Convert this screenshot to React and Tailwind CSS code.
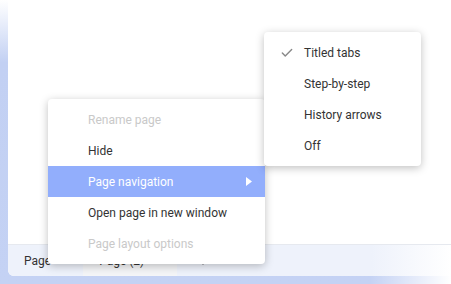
import { Check, X, Plus } from 'lucide-react';

const mainItems = [
  { label: 'Rename page', disabled: true },
  { label: 'Hide' },
  { label: 'Page navigation', active: true, sub: true },
  { label: 'Open page in new window' },
  { label: 'Page layout options', disabled: true },
];

const navItems = [
  { label: 'Titled tabs', checked: true },
  { label: 'Step-by-step' },
  { label: 'History arrows' },
  { label: 'Off' },
];

function App() {
  return (
    <div
      className="relative w-[451px] h-[284px] overflow-hidden bg-[linear-gradient(to_bottom,#ffffff,#c2d0f3_22%,#c4d2f4)] text-[12px] text-[#333]"
      style={{ fontFamily: 'Roboto, "Liberation Sans", sans-serif' }}
    >
      <div className="flex flex-col h-full pl-2 pb-2 bg-[linear-gradient(to_right,transparent_82%,#ffffff)]">
        <div className="flex-1 flex flex-col bg-white rounded-bl-md overflow-hidden">
          <div className="flex-1" />

          {/* tab bar */}
          <div className="h-8 flex items-center border-t border-[#e6e9ef] bg-[linear-gradient(to_right,#eef2fb_82%,#ffffff)]">
            <div className="flex items-center h-full pl-4 pr-3 gap-2">
              <span>Page</span>
              <X size={10} className="text-[#999]" />
            </div>
            <div className="flex items-center h-full ml-[2px] w-[94px] bg-[#f4f5f7] pl-4 gap-2">
              <span>Page (2)</span>
              <X size={10} className="text-[#999]" />
            </div>
            <Plus size={12} className="ml-5 text-[#777]" />
          </div>
        </div>
      </div>

      {/* context menu */}
      <div className="absolute left-[48px] top-[99px] w-[217px] py-[5px] bg-white rounded-[4px] shadow-[0_2px_8px_rgba(0,0,0,0.25)]">
        {mainItems.map((it) => (
          <div
            key={it.label}
            className={
              'relative h-[31px] flex items-center pl-10 ' +
              (it.active ? 'bg-[#92aefc] text-white' : it.disabled ? 'text-[#c9c9c9]' : 'text-[#333]')
            }
          >
            {it.label}
            {it.sub && (
              <svg className="absolute right-[13px]" width="6" height="9" viewBox="0 0 6 9">
                <path d="M0 0 L6 4.5 L0 9 Z" fill="white" />
              </svg>
            )}
          </div>
        ))}
      </div>

      {/* submenu */}
      <div className="absolute left-[264px] top-[32px] w-[157px] py-[5px] bg-white rounded-[4px] shadow-[0_2px_8px_rgba(0,0,0,0.25)]">
        {navItems.map((it) => (
          <div key={it.label} className="relative h-[31px] flex items-center pl-10 text-[#333]">
            {it.checked && (
              <Check size={14} strokeWidth={2.4} className="absolute left-[16px] text-[#888]" />
            )}
            {it.label}
          </div>
        ))}
      </div>
    </div>
  );
}

export default App;
